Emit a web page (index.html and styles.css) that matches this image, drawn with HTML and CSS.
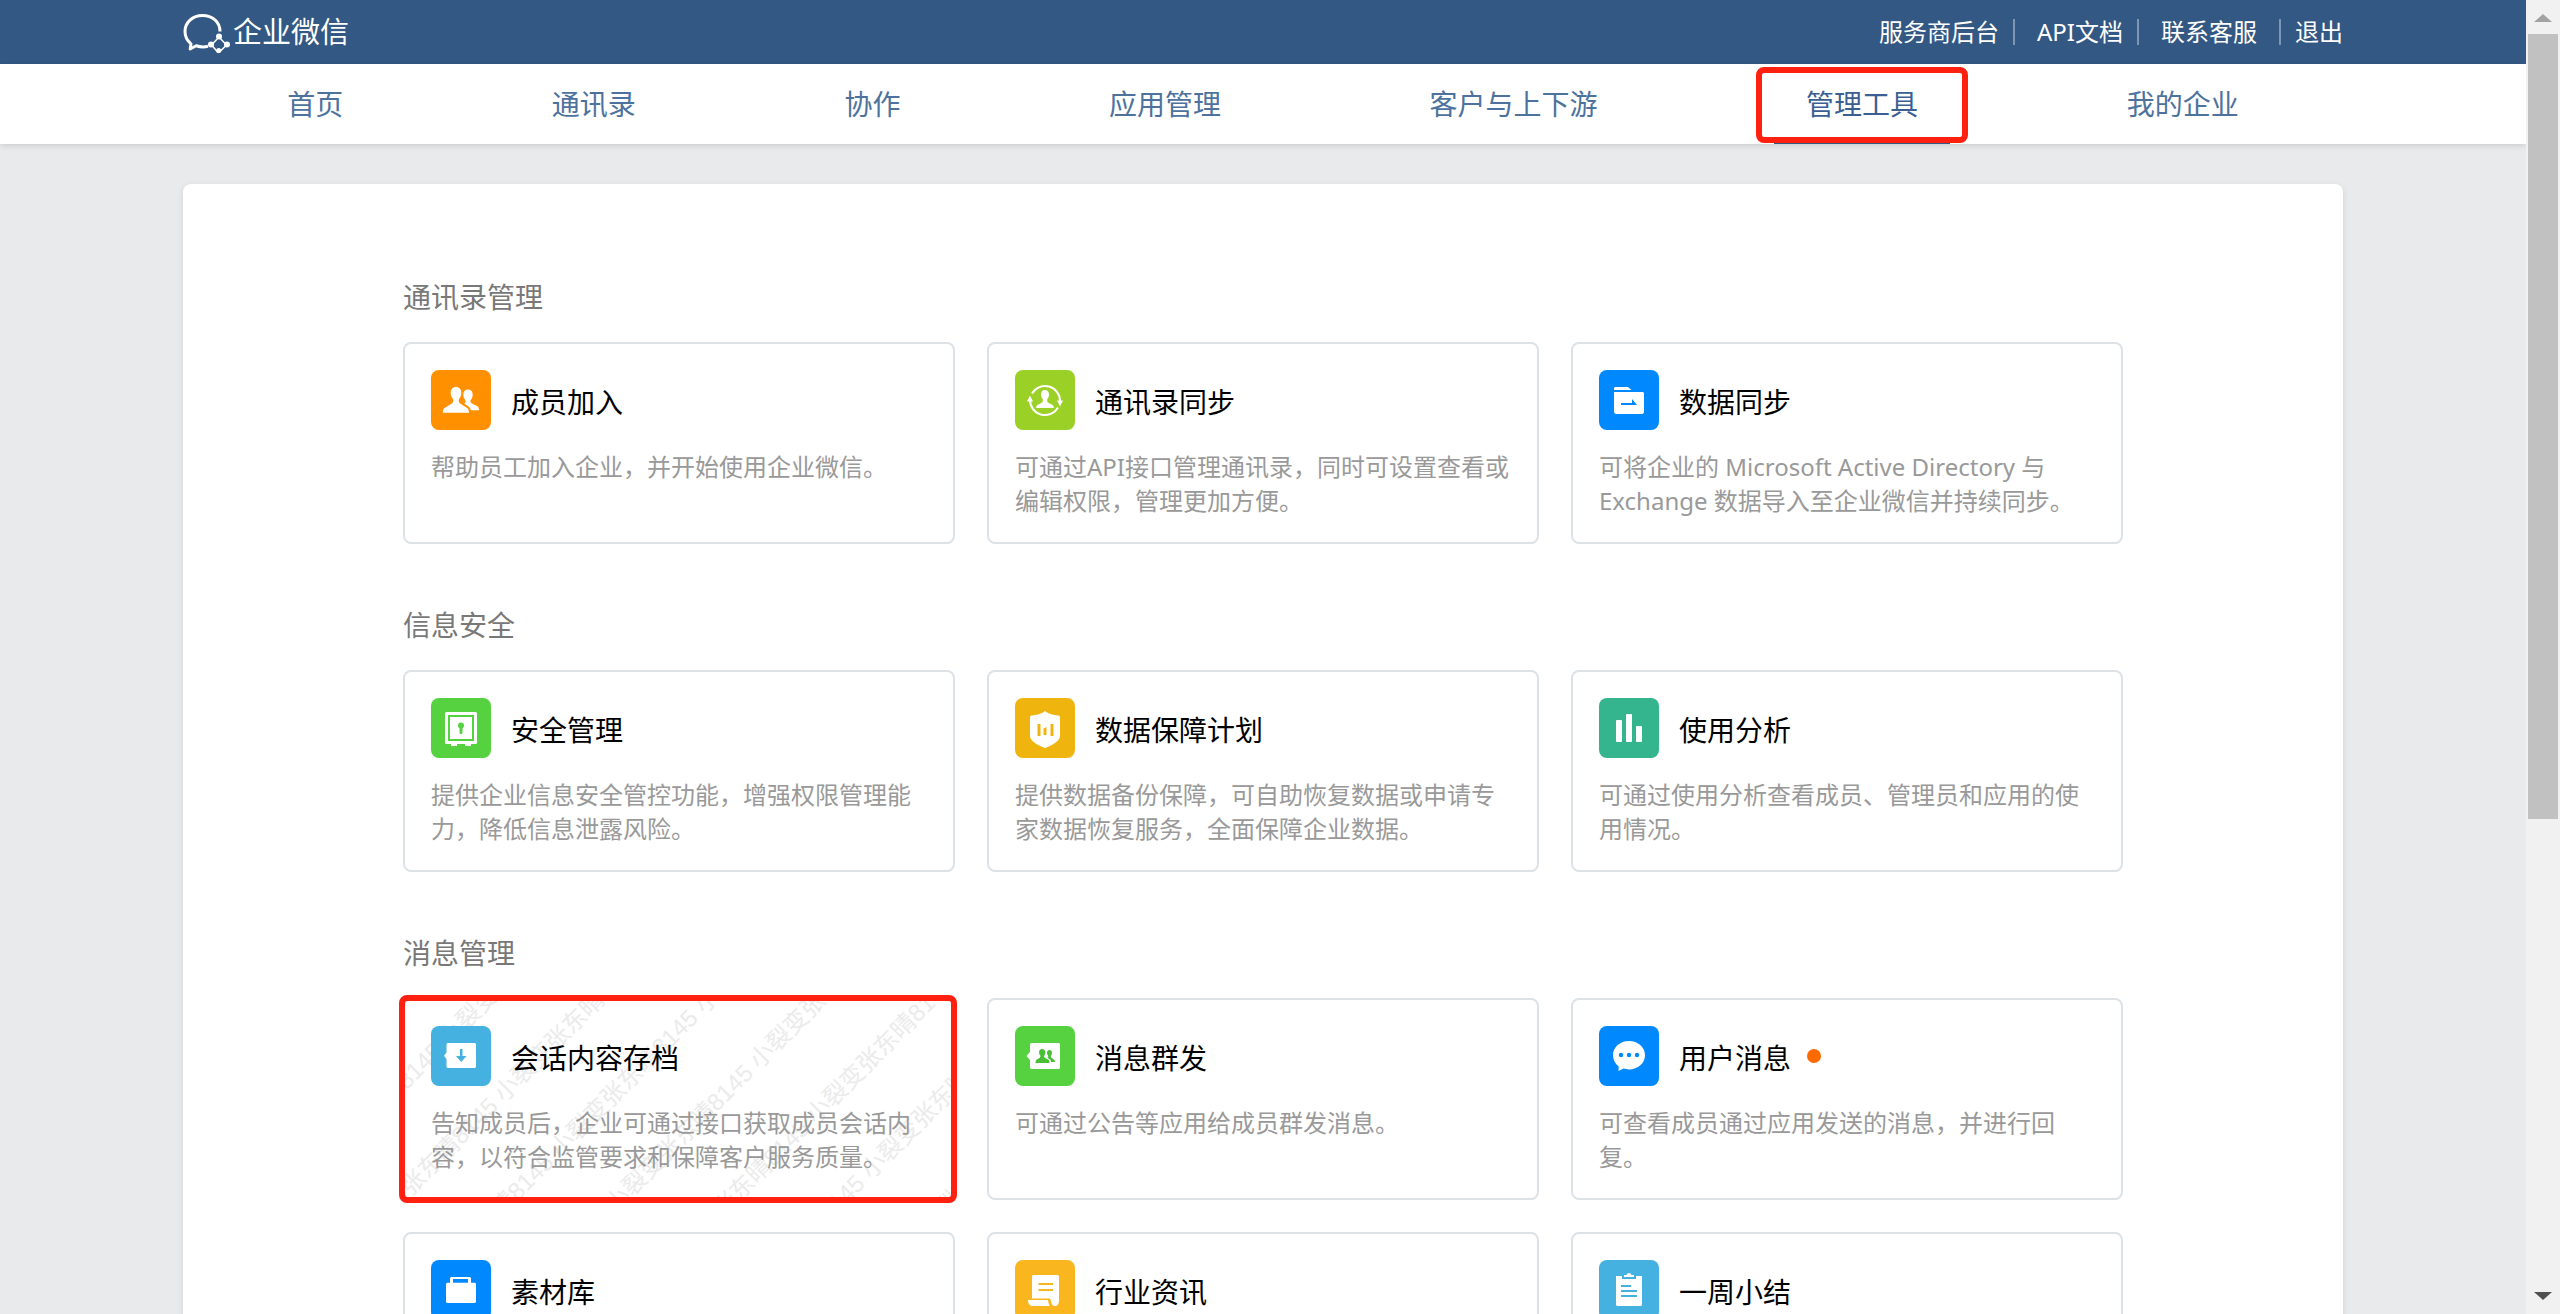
FILE: index.html
```html
<!DOCTYPE html>
<html lang="zh-CN">
<head>
<meta charset="utf-8">
<meta name="viewport" content="width=device-width, initial-scale=1">
<title>企业微信 - 管理工具</title>
<link rel="stylesheet" href="styles.css">
</head>
<body>
<div class="page">
  <header class="topbar">
    <div class="wrap topbar-inner">
      <a class="brand" href="#">
        <svg class="brand-mark" viewBox="0 0 48 42" aria-hidden="true">
          <path d="M37 20.500C37 11 29.500 4.500 19.500 4.500S2 11.500 2 20.500c0 5.500 2.500 9.500 6 12.300L7.200 38l6-3.200c4 1.300 8 1.500 11.800.5" fill="none" stroke="#fff" stroke-width="3" stroke-linejoin="round"/>
          <path d="M36 26l-7.500 8 7 8 8-8z" fill="none" stroke="#fff" stroke-width="1.500"/>
          <circle cx="36" cy="25.500" r="3" fill="#fff"/><circle cx="28" cy="33.500" r="3" fill="#fff"/><circle cx="44" cy="33.500" r="3" fill="#fff"/><circle cx="35.700" cy="39.500" r="2.500" fill="#fff"/>
        </svg>
        <span>企业微信</span>
      </a>
      <nav class="toplinks" aria-label="快捷链接">
        <a href="#">服务商后台</a>
        <a href="#">API文档</a>
        <a href="#">联系客服</a>
        <a class="logout" href="#">退出</a>
      </nav>
    </div>
  </header>

  <nav class="mainnav" aria-label="主导航">
    <div class="wrap mainnav-inner">
      <a href="#">首页</a>
      <a href="#">通讯录</a>
      <a href="#">协作</a>
      <a href="#">应用管理</a>
      <a href="#">客户与上下游</a>
      <a class="active" href="#" aria-current="page">管理工具</a>
      <a href="#">我的企业</a>
    </div>
  </nav>

  <main class="wrap panel">
    <section class="group">
      <h2>通讯录管理</h2>
      <div class="cards">
        <a class="card" href="#">
          <div class="card-head">
            <svg class="icon orange" viewBox="0 0 60 60" aria-hidden="true"><path fill="#fff" d="M25 17c-3.500 0-5.300 2.500-5.300 6 0 2.600 1 4.500 2.300 6 .6 1.700.2 3.500-1.500 4.700l-6.500 4c-1.500 1-2.200 2.500-2.200 5H38c0-2.500-.7-4-2.200-5l-6.300-4c-1.700-1.200-2.100-3-1.500-4.700 1.300-1.500 2.300-3.400 2.300-6 0-3.500-1.800-6-5.300-6z"/><path fill="#fff" d="M37 19.500c-3 0-4.700 2.200-4.700 5.200 0 2.200.9 4 2 5.200.5 1.500.2 2.500-1.100 3.600l4.600 3.200c1 .9 1.700 2.100 2.200 3.600h8c0-2.200-.7-3.500-2-4.300l-5-2.500c-1.500-1-1.900-2.200-1.300-3.600 1.100-1.200 2-3 2-5.200 0-3-1.700-5.200-4.700-5.200z"/></svg>
            <h3>成员加入</h3>
          </div>
          <p>帮助员工加入企业，并开始使用企业微信。</p>
        </a>
        <a class="card" href="#">
          <div class="card-head">
            <svg class="icon lime" viewBox="0 0 60 60" aria-hidden="true"><g fill="none" stroke="#fff" stroke-width="2"><path d="M17 23.500a15 15 0 0 1 28 8"/><path d="M43 37.500a15 15 0 0 1-28-8"/></g><path fill="#fff" d="M15 25.500l3 6h-6zM45 36.500l-3-6h6zM30 20c-2.700 0-4 2-4 4.600 0 2 .8 3.500 1.800 4.600.3 2-.2 3-1.600 3.800l-3.300 1.800c-1.200.7-1.800 1.700-1.800 3.200h17.800c0-1.500-.6-2.500-1.800-3.200L33.800 33c-1.400-.8-1.900-1.800-1.600-3.800 1-1.100 1.800-2.600 1.800-4.600 0-2.600-1.300-4.600-4-4.600z"/></svg>
            <h3>通讯录同步</h3>
          </div>
          <p>可通过API接口管理通讯录，同时可设置查看或编辑权限，管理更加方便。</p>
        </a>
        <a class="card" href="#">
          <div class="card-head">
            <svg class="icon blue" viewBox="0 0 60 60" aria-hidden="true"><path fill="#fff" d="M16 17h13l3.500 3H15v-2zM15 22h29l1 1v19.500l-1.500 1.500h-27L15 42.500z"/><path fill="#0089ff" d="M22 33h11v-4l5 6H22z"/></svg>
            <h3>数据同步</h3>
          </div>
          <p>可将企业的 Microsoft Active Directory 与 Exchange 数据导入至企业微信并持续同步。</p>
        </a>
      </div>
    </section>

    <section class="group">
      <h2>信息安全</h2>
      <div class="cards">
        <a class="card" href="#">
          <div class="card-head">
            <svg class="icon green" viewBox="0 0 60 60" aria-hidden="true"><rect x="14" y="14" width="32" height="32" rx="1.500" fill="#fff"/><path d="M20 45h6v3h-6zM34 45h6v3h-6z" fill="#fff"/><rect x="18" y="18" width="24" height="24" fill="none" stroke="#56d140" stroke-width="2"/><circle cx="30" cy="27.500" r="3" fill="#56d140"/><path d="M28.500 28h3v6.500q0 1.500-1.500 1.500t-1.500-1.500z" fill="#56d140"/></svg>
            <h3>安全管理</h3>
          </div>
          <p>提供企业信息安全管控功能，增强权限管理能力，降低信息泄露风险。</p>
        </a>
        <a class="card" href="#">
          <div class="card-head">
            <svg class="icon gold" viewBox="0 0 60 60" aria-hidden="true"><path fill="#fff" d="M30 13c2.500 2.200 6.500 3.900 13.500 4.500q1.500.2 1.500 1.700V38c0 4.500-6.500 9-15 12-8.500-3-15-7.500-15-12V19.200q0-1.500 1.500-1.700C23.500 16.900 27.500 15.200 30 13z"/><path fill="#f0b40f" d="M22.500 26h3v12h-3zM28.500 30.500l3-1.500v8h-3zM35.500 26h3v12h-3z"/></svg>
            <h3>数据保障计划</h3>
          </div>
          <p>提供数据备份保障，可自助恢复数据或申请专家数据恢复服务，全面保障企业数据。</p>
        </a>
        <a class="card" href="#">
          <div class="card-head">
            <svg class="icon teal" viewBox="0 0 60 60" aria-hidden="true"><g fill="#fff"><rect x="17" y="22" width="6" height="22" rx="1"/><rect x="27" y="16" width="6" height="28" rx="1"/><rect x="37" y="28" width="6" height="16" rx="1"/></g></svg>
            <h3>使用分析</h3>
          </div>
          <p>可通过使用分析查看成员、管理员和应用的使用情况。</p>
        </a>
      </div>
    </section>

    <section class="group">
      <h2>消息管理</h2>
      <div class="cards">
        <a class="card marked" href="#">
          <svg class="watermark" aria-hidden="true">
            <g transform="rotate(-45)">
              <text x="-207" y="65">小裂变张东晴8145 小裂变张东晴8145 小裂变张东晴8145</text>
              <text x="-207" y="143">小裂变张东晴8145 小裂变张东晴8145 小裂变张东晴8145</text>
              <text x="-207" y="222">小裂变张东晴8145 小裂变张东晴8145 小裂变张东晴8145</text>
              <text x="-207" y="300">小裂变张东晴8145 小裂变张东晴8145 小裂变张东晴8145</text>
              <text x="-2" y="379">小裂变张东晴8145 小裂变张东晴8145</text>
              <text x="-2" y="457">小裂变张东晴8145 小裂变张东晴8145</text>
              <text x="203" y="536">小裂变张东晴8145</text>
            </g>
          </svg>
          <div class="card-head">
            <svg class="icon sky" viewBox="0 0 60 60" aria-hidden="true"><path fill="#fff" d="M16.500 17h27.500l1 1v23l-1 1H16.500l-1-1v-8L13 29.700l2.500-3.300V18z"/><path fill="#45b1e0" d="M29 23h2.500v7h4L30.200 36 25 30h4z"/></svg>
            <h3>会话内容存档</h3>
          </div>
          <p>告知成员后，企业可通过接口获取成员会话内容，以符合监管要求和保障客户服务质量。</p>
        </a>
        <a class="card" href="#">
          <div class="card-head">
            <svg class="icon green" viewBox="0 0 60 60" aria-hidden="true"><path fill="#fff" d="M16 17h28l1 1v24l-1 1H16l-1-1v-8l-3.500-4 3.500-4v-8z"/><path fill="#48bf35" d="M27 23c-1.900 0-2.900 1.400-2.900 3.200 0 1.500.5 2.500 1.200 3.300.3 1 0 1.800-.8 2.400l-2.700 1.700c-.8.600-1.300 1.600-1.300 3.400h14c0-1.800-.5-2.800-1.300-3.400l-3.200-1.700c-.8-.6-1.100-1.400-.8-2.400.7-.8 1.200-1.800 1.200-3.300 0-1.800-1.500-3.200-3.400-3.200z"/><path fill="#48bf35" d="M34.500 24c-1.600 0-2.500 1.200-2.500 2.800 0 1.300.5 2.200 1.100 2.900.3.900 0 1.600-.7 2.100l2.600 1.700c.6.600 1 1.400 1.200 2.500H40c0-1.400-.4-2-1.100-2.500l-2.300-1.700c-.7-.5-.9-1.200-.6-2.100.6-.7 1-1.600 1-2.900 0-1.600-.9-2.800-2.500-2.800z"/></svg>
            <h3>消息群发</h3>
          </div>
          <p>可通过公告等应用给成员群发消息。</p>
        </a>
        <a class="card" href="#">
          <div class="card-head">
            <svg class="icon blue" viewBox="0 0 60 60" aria-hidden="true"><path fill="#fff" d="M30 15c9 0 16 6.200 16 14.200S39 43.400 30 43.400c-2 0-3.800-.3-5.500-.8L19.500 45l.2-4.600C16.200 37.800 14 33.800 14 29.200 14 21.200 21 15 30 15z"/><g fill="#0089ff"><circle cx="22" cy="29" r="2.200"/><circle cx="30" cy="29" r="2.200"/><circle cx="38" cy="29" r="2.200"/></g></svg>
            <h3>用户消息</h3>
            <span class="dot" role="img" aria-label="有新消息"></span>
          </div>
          <p>可查看成员通过应用发送的消息，并进行回复。</p>
        </a>
        <a class="card" href="#">
          <div class="card-head">
            <svg class="icon blue" viewBox="0 0 60 60" aria-hidden="true"><path fill="#fff" d="M20 17h19l1 1v4.700h4l1 1V42l-1 1H16l-1-1V23.700l1-1h3V18zM22 19v3.700h15V19z" fill-rule="evenodd"/></svg>
            <h3>素材库</h3>
          </div>
          <p></p>
        </a>
        <a class="card" href="#">
          <div class="card-head">
            <svg class="icon amber" viewBox="0 0 60 60" aria-hidden="true"><path fill="#fff" d="M18.500 15h24q1.500 0 1.500 1.500V41c0 3-1.500 5-3.800 5-2.600 0-3.900-2-4.200-4.500-.2-2-.8-3-2-3H17v-22q0-1.500 1.500-1.500zM13 40h19c1 0 1.200.5 1.300 1.500.2 2 .8 3.500 1.700 4.500H17.500c-2.800 0-4.500-2.500-4.500-6z"/><path fill="#f9b61f" d="M23.500 23H38v2H23.500zM23.500 29H38v2H23.500z"/></svg>
            <h3>行业资讯</h3>
          </div>
          <p></p>
        </a>
        <a class="card" href="#">
          <div class="card-head">
            <svg class="icon sky" viewBox="0 0 60 60" aria-hidden="true"><path fill="#fff" d="M17 16h6v3h14v-3h6v29l-1 1H18l-1-1zM25 17v-2h2.500q.5-2 2.500-2t2.500 2H35v2z"/><path fill="#45b1e0" d="M22 25h10v2H22zM22 30h16v2H22zM22 35h16v2H22z"/></svg>
            <h3>一周小结</h3>
          </div>
          <p></p>
        </a>
      </div>
    </section>
  </main>
</div>

<div class="scrollbar" aria-hidden="true">
  <svg class="arrow" viewBox="0 0 18 8"><path d="M9 0l9 8H0z" fill="#a3a3a3"/></svg>
  <div class="track"><div class="thumb"></div></div>
  <svg class="arrow" viewBox="0 0 18 8"><path d="M0 0h18L9 8z" fill="#505050"/></svg>
</div>
</body>
</html>
```
FILE: styles.css
```css
* {
  box-sizing: border-box;
}

body {
  margin: 0;
  display: flex;
  height: 100vh;
  overflow: hidden;
  background: #e8eaec;
  color: #000;
  font-family: "Noto Sans", "Noto Sans CJK SC", sans-serif;
  font-size: 24px;
  line-height: 34px;
}

a {
  color: inherit;
  text-decoration: none;
}

h2,
h3,
p {
  margin: 0;
  font-weight: 400;
}

.page {
  flex: 1;
  min-width: 0;
  overflow: hidden;
}

.wrap {
  max-width: 2160px;
  margin: 0 auto;
}

/* Top bar */
.topbar {
  background: #335883;
  color: #fff;
}

.topbar-inner {
  display: flex;
  justify-content: space-between;
  align-items: center;
  height: 64px;
}

.brand {
  display: flex;
  align-items: center;
  gap: 2px;
  font-size: 29px;
}

.brand-mark {
  width: 48px;
  height: 42px;
}

.toplinks {
  display: flex;
  align-items: center;
}

.toplinks a + a {
  display: flex;
  align-items: center;
}

.toplinks a + a::before {
  content: "";
  width: 2px;
  height: 26px;
  margin: 0 22px 0 14px;
  background: #8097b3;
}

.toplinks .logout::before {
  margin: 0 14px 0 22px;
}

/* Main navigation */
.mainnav {
  background: #fff;
  box-shadow: 0 2px 6px rgba(0, 0, 0, 0.12);
}

.mainnav-inner {
  display: flex;
  justify-content: space-around;
  height: 80px;
  color: #4c729d;
  font-size: 28px;
}

.mainnav-inner a {
  display: flex;
  align-items: center;
}

.mainnav-inner .active {
  position: relative;
  color: #3b5f92;
}

.mainnav-inner .active::before {
  content: "";
  position: absolute;
  inset: auto -32px 0;
  height: 4px;
  background: #335883;
}

.mainnav-inner .active::after {
  content: "";
  position: absolute;
  inset: 3px -50px 1px;
  border: 6px solid #ff2010;
  border-radius: 8px;
}

/* Content panel */
.panel {
  display: flex;
  flex-direction: column;
  gap: 60px;
  margin-top: 40px;
  padding: 92px 220px;
  background: #fff;
  border-radius: 8px;
  box-shadow: 0 2px 6px rgba(0, 0, 0, 0.1);
}

.group h2 {
  margin-bottom: 24px;
  color: #787878;
  font-size: 28px;
  line-height: 42px;
}

.cards {
  display: grid;
  grid-template-columns: repeat(3, 1fr);
  gap: 32px;
}

.card {
  position: relative;
  display: flex;
  flex-direction: column;
  gap: 20px;
  padding: 26px 26px 24px;
  border: 2px solid #dde2e6;
  border-radius: 8px;
}

.card-head {
  position: relative;
  display: flex;
  align-items: center;
  gap: 20px;
}

.card h3 {
  padding-top: 4px;
  font-size: 28px;
}

.card p {
  position: relative;
  min-height: 68px;
  color: #999;
}

.icon {
  width: 60px;
  height: 60px;
  border-radius: 8px;
}

.orange { background: #ff9000; }
.lime { background: #9bd126; }
.blue { background: #0089ff; }
.green { background: #56d140; }
.gold { background: #f0b40f; }
.teal { background: #34b58e; }
.sky { background: #45b1e0; }
.amber { background: #f9b61f; }

.dot {
  width: 14px;
  height: 14px;
  margin-left: -4px;
  border-radius: 50%;
  background: #ff6a00;
}

/* Card with the red frame and the staff watermark */
.marked::after {
  content: "";
  position: absolute;
  inset: -5px -4px -5px -6px;
  border: 6px solid #ff2010;
  border-radius: 8px;
}

.watermark {
  position: absolute;
  top: 0;
  left: 0;
  width: 100%;
  height: 100%;
  fill: #ebebeb;
  font-family: "Liberation Sans", "Noto Sans CJK SC", sans-serif;
  font-size: 24px;
}

/* Scroll bar */
.scrollbar {
  display: flex;
  flex-direction: column;
  align-items: center;
  justify-content: space-between;
  gap: 12px;
  width: 34px;
  padding: 14px 2px;
  background: #f1f1f1;
}

.arrow {
  width: 18px;
  height: 8px;
}

.track {
  flex: 1;
  width: 100%;
}

.thumb {
  height: 63%;
  background: #c1c1c1;
}
```
